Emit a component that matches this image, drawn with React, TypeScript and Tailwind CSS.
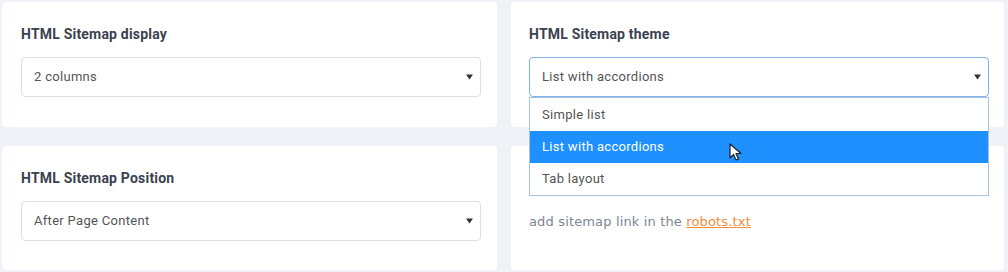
import React from "react";

function Caret() {
  return (
    <svg width="7" height="6" viewBox="0 0 7 6" className="shrink-0">
      <path d="M0 0.5 L7 0.5 L3.5 5.5 Z" fill="#333" />
    </svg>
  );
}

function Select({ value, focused }: { value: string; focused?: boolean }) {
  return (
    <div
      className={
        "flex h-[40px] items-center justify-between rounded-[4px] border bg-white pl-[12px] pr-[7px] text-[13px] tracking-[0.3px] text-[#555] " +
        (focused ? "border-[#7fb2e5]" : "border-[#dcdfe4]")
      }
    >
      <span>{value}</span>
      <Caret />
    </div>
  );
}

function Title({ children }: { children: React.ReactNode }) {
  return (
    <div className="text-[14px] font-bold leading-[16px] tracking-[0.2px] text-[#3b4250]">
      {children}
    </div>
  );
}

export default function App() {
  return (
    <div
      className="h-[272px] w-[1008px] overflow-hidden bg-[#eff2f7] p-[2px]"
      style={{ fontFamily: "Roboto, 'Liberation Sans', sans-serif" }}
    >
      <div className="grid grid-cols-[495px_493px] grid-rows-[125px_124px] gap-x-[14px] gap-y-[19px]">
        <div className="rounded-[4px] bg-white pl-[19px] pr-[16px] pt-[24px]">
          <Title>HTML Sitemap display</Title>
          <div className="mt-[15px]">
            <Select value="2 columns" />
          </div>
        </div>
        <div className="relative z-10 rounded-[4px] bg-white pl-[18px] pr-[15px] pt-[24px]">
          <Title>HTML Sitemap theme</Title>
          <div className="relative mt-[15px]">
            <Select value="List with accordions" focused />
            <div className="absolute left-0 right-0 top-[40px] border border-[#a8c0e2] bg-white text-[13px] tracking-[0.3px] text-[#555]">
              <div className="flex h-[33px] items-center pl-[12px]">Simple list</div>
              <div className="relative flex h-[32px] items-center bg-[#1e90ff] pl-[12px] text-white">
                List with accordions
                <svg
                  className="absolute left-[199px] top-[12px]"
                  width="14"
                  height="20"
                  viewBox="0 0 14 20"
                >
                  <path
                    d="M1 1 L1 15 L4.5 11.5 L7 17 L9.5 16 L7 10.5 L12 10.5 Z"
                    fill="#fff"
                    stroke="#222"
                    strokeWidth="1.2"
                    strokeLinejoin="round"
                  />
                </svg>
              </div>
              <div className="flex h-[32px] items-center pl-[12px]">Tab layout</div>
            </div>
          </div>
        </div>
        <div className="rounded-[4px] bg-white pl-[19px] pr-[16px] pt-[24px]">
          <Title>HTML Sitemap Position</Title>
          <div className="mt-[15px]">
            <Select value="After Page Content" />
          </div>
        </div>
        <div className="rounded-[4px] bg-white pl-[18px] pt-[66px]">
          <div
            className="text-[13px] tracking-[0.15px] text-[#7d8592]"
            style={{ fontFamily: "'DejaVu Sans', Verdana, sans-serif" }}
          >
            add sitemap link in the{" "}
            <a className="text-[#f28c3c] underline" href="#">
              robots.txt
            </a>
          </div>
        </div>
      </div>
    </div>
  );
}
